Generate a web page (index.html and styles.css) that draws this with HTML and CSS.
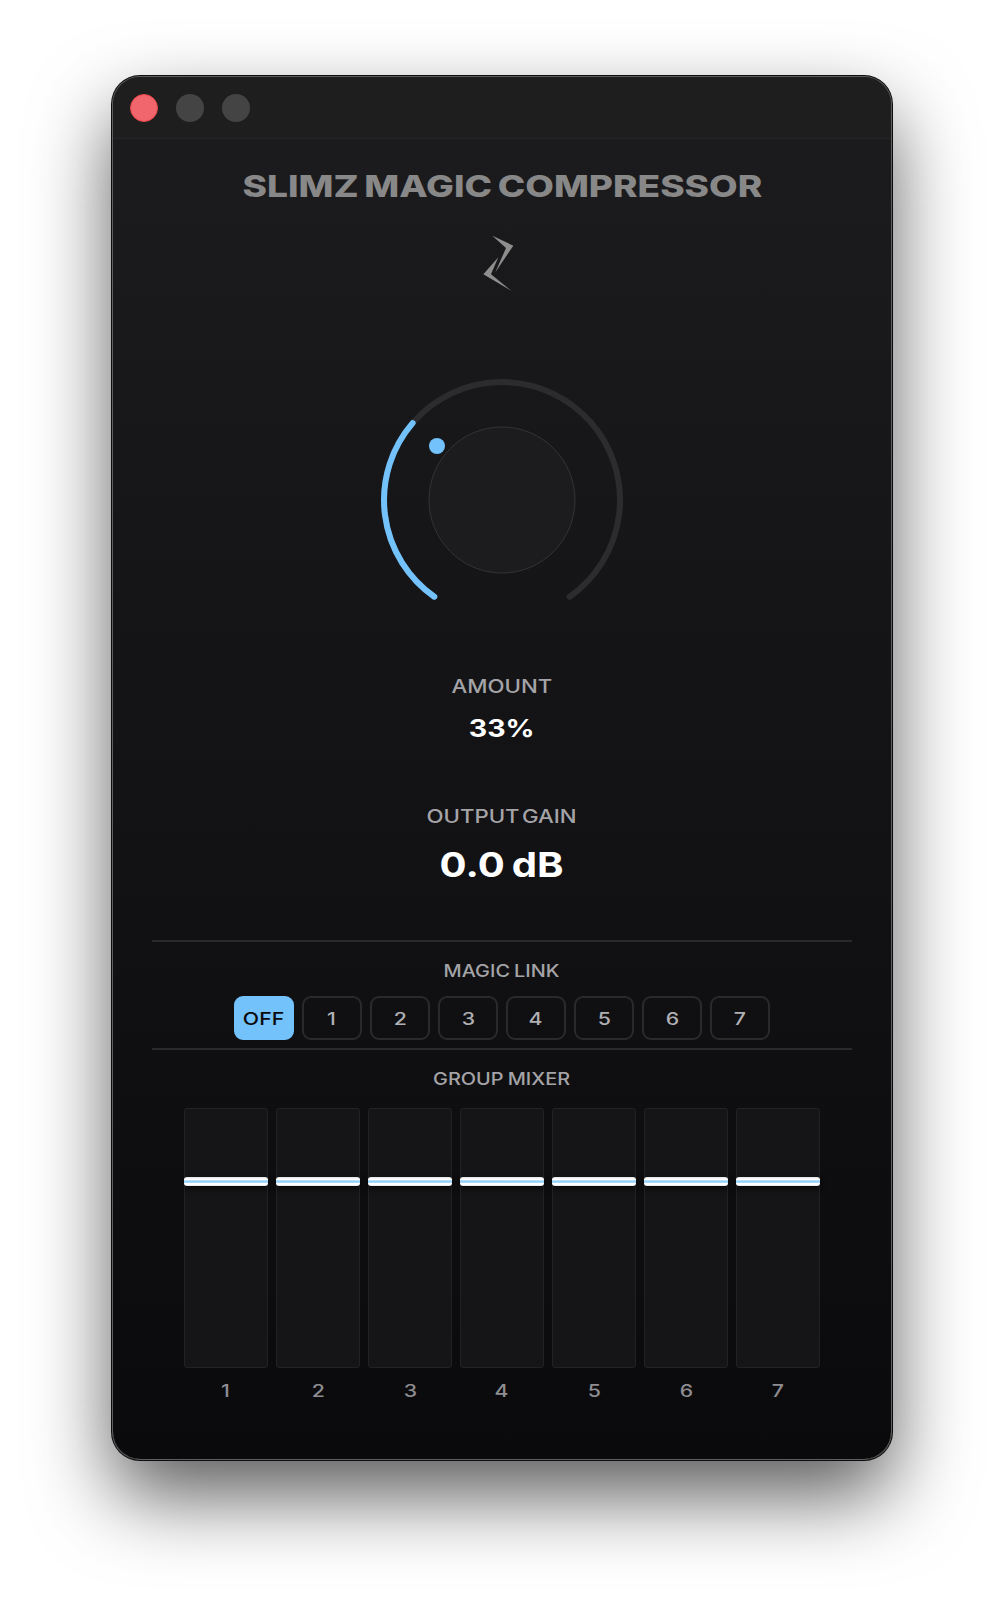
FILE: index.html
```html
<!DOCTYPE html>
<html lang="en">

<head>
    <meta charset="UTF-8">
    <meta name="viewport" content="width=device-width, initial-scale=1.0">
    <title>Slimz Magic Compressor</title>
    <link rel="stylesheet" href="styles.css">
</head>

<body>
    <div class="window">
        <div class="titlebar">
            <span class="light light-close"></span>
            <span class="light"></span>
            <span class="light"></span>
        </div>
        <div class="content">
            <h1 class="title"><span>SLIMZ MAGIC COMPRESSOR</span></h1>

            <svg class="logo" width="120" height="80" viewBox="0 0 360 240">
                <polygon points="157,47 220,77 166,157 198,84" fill="#8e8e8e" />
                <polygon points="175,112 130,163 215,213 153,163" fill="#8e8e8e" />
            </svg>

            <svg class="dial" width="280" height="280" viewBox="0 0 280 280">
                <path d="M 72.3 236.7 A 118 118 0 1 1 207.7 236.7" fill="none" stroke="#2c2c2e" stroke-width="6" stroke-linecap="round" />
                <path d="M 72.3 236.7 A 118 118 0 0 1 50.6 63.1" fill="none" stroke="#73c2fb" stroke-width="6" stroke-linecap="round" />
                <circle cx="140" cy="140" r="73" fill="#1c1c1e" stroke="#343436" stroke-width="1" />
                <circle cx="75" cy="86" r="8" fill="#73c2fb" />
            </svg>

            <div class="label label-amount"><span>AMOUNT</span></div>
            <div class="amount-value"><span>33%</span></div>

            <div class="label label-gain"><span>OUTPUT GAIN</span></div>
            <div class="gain-value"><span>0.0 dB</span></div>

            <div class="divider divider-top"></div>

            <div class="small-label label-link"><span>MAGIC LINK</span></div>
            <div class="link-row">
                <button class="link-btn active"><span>OFF</span></button>
                <button class="link-btn"><span>1</span></button>
                <button class="link-btn"><span>2</span></button>
                <button class="link-btn"><span>3</span></button>
                <button class="link-btn"><span>4</span></button>
                <button class="link-btn"><span>5</span></button>
                <button class="link-btn"><span>6</span></button>
                <button class="link-btn"><span>7</span></button>
            </div>

            <div class="divider divider-bottom"></div>

            <div class="small-label label-mixer"><span>GROUP MIXER</span></div>
            <div class="mixer">
                <div class="channel"><div class="fader"><div class="thumb"></div></div><div class="channel-num"><span>1</span></div></div>
                <div class="channel"><div class="fader"><div class="thumb"></div></div><div class="channel-num"><span>2</span></div></div>
                <div class="channel"><div class="fader"><div class="thumb"></div></div><div class="channel-num"><span>3</span></div></div>
                <div class="channel"><div class="fader"><div class="thumb"></div></div><div class="channel-num"><span>4</span></div></div>
                <div class="channel"><div class="fader"><div class="thumb"></div></div><div class="channel-num"><span>5</span></div></div>
                <div class="channel"><div class="fader"><div class="thumb"></div></div><div class="channel-num"><span>6</span></div></div>
                <div class="channel"><div class="fader"><div class="thumb"></div></div><div class="channel-num"><span>7</span></div></div>
            </div>
        </div>
    </div>
</body>

</html>
```

FILE: styles.css
```css
body {
    font-family: Inter, "Liberation Sans", sans-serif;
    margin: 0;
    padding: 77px 0 0;
    background-color: #fff;
    height: 1531px;
    overflow: hidden;
}

.window {
    width: 778px;
    height: 1382px;
    margin: 0 auto;
    border-radius: 27px;
    overflow: hidden;
    background: linear-gradient(180deg, #1c1c1e 0%, #0a0a0c 100%);
    box-shadow: 0 0 0 1px #5e5e60, 0 0 0 2px #0c0c0c, 0 36px 80px rgba(0, 0, 0, 0.65);
}

.titlebar {
    display: flex;
    align-items: center;
    gap: 18px;
    height: 62px;
    box-sizing: border-box;
    padding: 0 17px;
    background-color: #1e1e1f;
    border-bottom: 1px solid #252526;
}

.light {
    width: 28px;
    height: 28px;
    box-sizing: border-box;
    border-radius: 50%;
    background-color: #444;
}

.light-close {
    background-color: #f1666c;
    border: 1px solid #e4474c;
}

.content {
    display: flex;
    flex-direction: column;
    align-items: center;
}

.content span {
    display: inline-block;
}

.title {
    margin: 29px 0 0;
    font-size: 30px;
    line-height: 36px;
    font-weight: 800;
    color: #888;
    white-space: nowrap;
    word-spacing: -2px;
}

.title span {
    transform: scaleX(1.235);
}

.logo {
    margin: 16px 4px 0 0;
}

.dial {
    margin-top: 60px;
}

.label,
.small-label {
    color: #a4a4a8;
    font-weight: 500;
    white-space: nowrap;
}

.label {
    font-size: 18.5px;
    line-height: 20px;
    word-spacing: -3px;
}

.label span {
    transform: scaleX(1.2);
}

.label-amount {
    margin-top: 36px;
}

.label-gain {
    margin-top: 65px;
}

.amount-value {
    margin-top: 21px;
    font-size: 24px;
    line-height: 24px;
    font-weight: 700;
    color: #fff;
}

.amount-value span {
    transform: scaleX(1.19);
}

.gain-value {
    margin-top: 21px;
    font-size: 34px;
    line-height: 36px;
    font-weight: 700;
    color: #fff;
    word-spacing: -2px;
}

.gain-value span {
    transform: scaleX(1.18);
}

.divider {
    width: 700px;
    height: 2px;
    background-color: #2a2a2c;
}

.divider-top {
    margin-top: 57px;
}

.small-label {
    font-size: 17px;
    line-height: 20px;
    word-spacing: -1px;
}

.small-label span {
    transform: scaleX(1.17);
}

.label-link {
    margin-top: 19px;
}

.link-row {
    display: flex;
    gap: 8px;
    margin-top: 15px;
}

.link-btn {
    width: 60px;
    height: 44px;
    padding: 1px 0 0;
    box-sizing: border-box;
    border: 2px solid #2a2a2c;
    border-radius: 9px;
    background: transparent;
    color: #b0b0b4;
    font-family: inherit;
    font-size: 17px;
    font-weight: 500;
}

.link-btn span {
    transform: scaleX(1.25);
}

.link-btn.active {
    background-color: #73c2fb;
    border-color: #73c2fb;
    color: #0a0a0c;
}

.divider-bottom {
    margin-top: 8px;
}

.label-mixer {
    margin-top: 19px;
}

.mixer {
    display: flex;
    gap: 8px;
    margin-top: 19px;
}

.channel {
    width: 84px;
}

.fader {
    height: 260px;
    box-sizing: border-box;
    padding-top: 68px;
    border: 1px solid #222224;
    border-radius: 3px;
    background-color: #151517;
}

.thumb {
    height: 9px;
    margin: 0 -1px;
    border-radius: 3px;
    background: linear-gradient(180deg, #ddd 0%, #fff 20%, #fff 30%, #9fd4fa 42%, #8ccdfa 58%, #fff 70%, #fff 85%, #ddd 100%);
    box-shadow: 0 3px 6px rgba(0, 0, 0, 0.6);
}

.channel-num {
    margin-top: 13px;
    font-size: 17px;
    line-height: 20px;
    font-weight: 500;
    text-align: center;
    color: #8e8e92;
}

.channel-num span {
    transform: scaleX(1.25);
}
```
